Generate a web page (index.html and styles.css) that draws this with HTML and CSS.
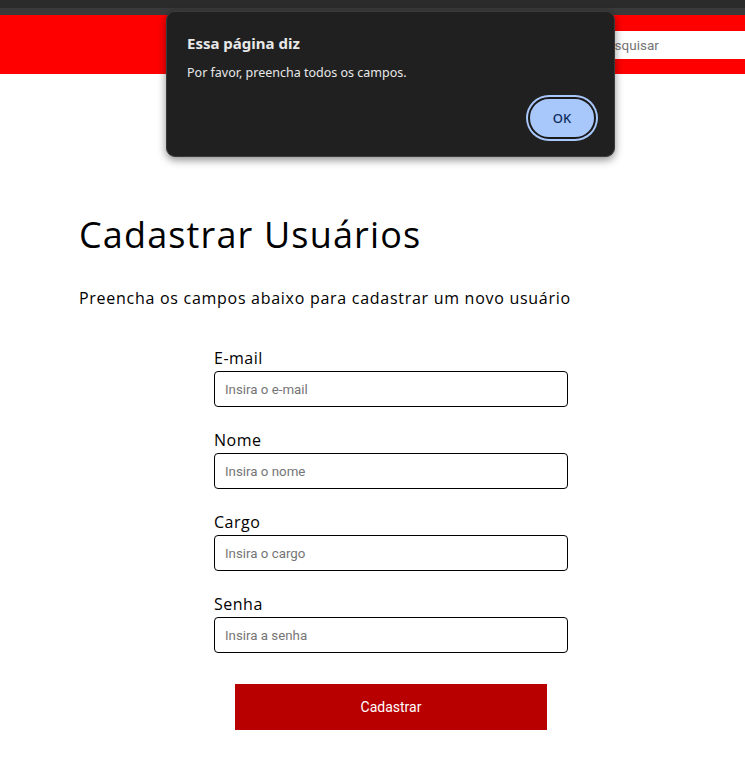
FILE: index.html
```html
<!DOCTYPE html>
<html lang="pt-BR">
<head>
<meta charset="utf-8">
<title>Cadastrar Usuários</title>
<link rel="stylesheet" href="styles.css">
</head>
<body>
<div class="topstrip"><div class="topstrip-dark"></div></div>
<header class="header">
  <input class="search" type="text" placeholder="Pesquisar">
</header>
<main class="main">
  <h1 class="title">Cadastrar Usuários</h1>
  <p class="subtitle">Preencha os campos abaixo para cadastrar um novo usuário</p>
  <form class="form">
    <div class="field">
      <label class="label">E-mail</label>
      <input class="input" type="text" placeholder="Insira o e-mail">
    </div>
    <div class="field">
      <label class="label">Nome</label>
      <input class="input" type="text" placeholder="Insira o nome">
    </div>
    <div class="field">
      <label class="label">Cargo</label>
      <input class="input" type="text" placeholder="Insira o cargo">
    </div>
    <div class="field">
      <label class="label">Senha</label>
      <input class="input" type="password" placeholder="Insira a senha">
    </div>
    <button class="submit" type="button">Cadastrar</button>
  </form>
</main>
<div class="dialog">
  <div class="dialog-title">Essa página diz</div>
  <div class="dialog-msg">Por favor, preencha todos os campos.</div>
  <div class="dialog-actions"><button class="ok" type="button">OK</button></div>
</div>
</body>
</html>
```
FILE: styles.css
```css
* { box-sizing: border-box; }
html, body { margin: 0; padding: 0; background: #fff; }
body { font-family: "Open Sans", "Liberation Sans", sans-serif; color: #000; overflow: hidden; }

.topstrip { height: 15px; background: #3a3a3a; }
.topstrip-dark { height: 8px; background: #2b2b2b; }

.header {
  height: 59px;
  background: #ff0000;
  display: flex;
  align-items: center;
  justify-content: flex-end;
  overflow: hidden;
}
.search {
  width: 170px;
  height: 28px;
  margin-right: -14px;
  border: none;
  outline: none;
  padding: 0 10px;
  font-family: Roboto, "Liberation Sans", sans-serif;
  font-size: 13.5px;
  background: #fff;
}
.search::placeholder { color: #757575; }

.main { padding: 139px 0 0 79px; }
.title {
  margin: 0;
  font-weight: 400;
  font-size: 36px;
  line-height: 44px;
  letter-spacing: 1.15px;
}
.subtitle {
  margin: 29px 0 0;
  font-size: 16px;
  line-height: 24px;
  letter-spacing: 0.72px;
}
.form {
  width: 354px;
  margin: 37px 0 0 135px;
  display: flex;
  flex-direction: column;
  gap: 22px;
}
.field { display: flex; flex-direction: column; }
.label {
  font-size: 16px;
  line-height: 22px;
  margin-bottom: 2px;
  letter-spacing: 0.5px;
}
.input {
  height: 36px;
  border: 1px solid #000;
  border-radius: 4px;
  padding: 0 10px;
  font-family: Roboto, "Liberation Sans", sans-serif;
  font-size: 13.3px;
  outline: none;
}
.input::placeholder { color: #757575; }
.submit {
  align-self: center;
  width: 312px;
  height: 46px;
  margin-top: 9px;
  background: #b80000;
  color: #fff;
  border: none;
  font-family: Roboto, "Liberation Sans", sans-serif;
  font-size: 14px;
}

.dialog {
  position: absolute;
  left: 166px;
  top: 11px;
  width: 449px;
  height: 146px;
  background: #202020;
  border-radius: 9px;
  border: 1px solid #3a3a3a;
  box-shadow: 0 3px 8px rgba(0,0,0,0.45);
  padding: 21px 18px 0 20px;
  font-family: "Noto Sans", "Open Sans", sans-serif;
  color: #e8e8e8;
}
.dialog-title { font-size: 15px; font-weight: 700; line-height: 20px; }
.dialog-msg { font-size: 12.5px; line-height: 18px; margin-top: 11px; }
.dialog-actions { display: flex; justify-content: flex-end; margin-top: 15px; }
.ok {
  width: 68px;
  height: 42px;
  border-radius: 21px;
  background: #a8c7fa;
  border: 2px solid #1a1a1a;
  box-shadow: 0 0 0 2px #a8c7fa;
  color: #0b2a5a;
  font-family: "Noto Sans", sans-serif;
  font-size: 13px;
  font-weight: 500;
}
```
